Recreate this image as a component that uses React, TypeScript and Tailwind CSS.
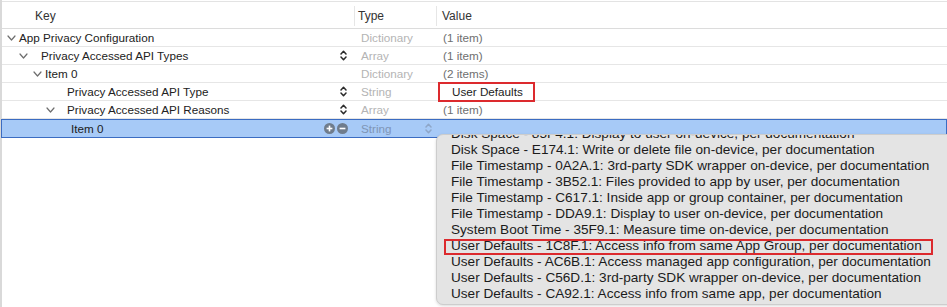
import React from "react";

type Row = {
  key: string;
  chevronX?: number;
  textX: number;
  type: string;
  value: string;
  stepper?: boolean;
  boxed?: boolean;
};

const rows: Row[] = [
  { key: "App Privacy Configuration", chevronX: 5, textX: 17, type: "Dictionary", value: "(1 item)" },
  { key: "Privacy Accessed API Types", chevronX: 17, textX: 39, type: "Array", value: "(1 item)", stepper: true },
  { key: "Item 0", chevronX: 31, textX: 43, type: "Dictionary", value: "(2 items)" },
  { key: "Privacy Accessed API Type", textX: 65, type: "String", value: "User Defaults", stepper: true, boxed: true },
  { key: "Privacy Accessed API Reasons", chevronX: 44, textX: 65, type: "Array", value: "(1 item)", stepper: true },
];

const reasons = [
  "Disk Space - 85F4.1: Display to user on-device, per documentation",
  "Disk Space - E174.1: Write or delete file on-device, per documentation",
  "File Timestamp - 0A2A.1: 3rd-party SDK wrapper on-device, per documentation",
  "File Timestamp - 3B52.1: Files provided to app by user, per documentation",
  "File Timestamp - C617.1: Inside app or group container, per documentation",
  "File Timestamp - DDA9.1: Display to user on-device, per documentation",
  "System Boot Time - 35F9.1: Measure time on-device, per documentation",
  "User Defaults - 1C8F.1: Access info from same App Group, per documentation",
  "User Defaults - AC6B.1: Access managed app configuration, per documentation",
  "User Defaults - C56D.1: 3rd-party SDK wrapper on-device, per documentation",
  "User Defaults - CA92.1: Access info from same app, per documentation",
];

function Chevron() {
  return (
    <svg width="9" height="6" viewBox="0 0 9 6" className="block">
      <polyline points="1,1 4.5,5 8,1" fill="none" stroke="#6e6e6e" strokeWidth="1.2" strokeLinecap="round" strokeLinejoin="round" />
    </svg>
  );
}

function Stepper({ color = "#2a2a2a" }: { color?: string }) {
  return (
    <svg width="7" height="11" viewBox="0 0 7 11" className="block">
      <polyline points="1,4 3.5,1.3 6,4" fill="none" stroke={color} strokeWidth="1.5" strokeLinecap="round" strokeLinejoin="round" />
      <polyline points="1,7 3.5,9.7 6,7" fill="none" stroke={color} strokeWidth="1.5" strokeLinecap="round" strokeLinejoin="round" />
    </svg>
  );
}

function CircleBtn({ plus }: { plus?: boolean }) {
  return (
    <svg width="11" height="11" viewBox="0 0 11 11" className="block">
      <circle cx="5.5" cy="5.5" r="5.5" fill="#6f7c8c" />
      <line x1="2.6" y1="5.5" x2="8.4" y2="5.5" stroke="white" strokeWidth="1.6" />
      {plus && <line x1="5.5" y1="2.6" x2="5.5" y2="8.4" stroke="white" strokeWidth="1.6" />}
    </svg>
  );
}

function TableRow({ row }: { row: Row }) {
  return (
    <div className="flex h-[18px] items-center border-b border-[#e6e6e6]">
      <div className="relative flex h-full w-[354px] shrink-0 items-center">
        {row.chevronX !== undefined && (
          <span className="absolute top-[6px]" style={{ left: row.chevronX }}>
            <Chevron />
          </span>
        )}
        <span className="text-[#222]" style={{ paddingLeft: row.textX }}>
          {row.key}
        </span>
        {row.stepper && (
          <span className="absolute left-[338px] top-[3px]">
            <Stepper />
          </span>
        )}
      </div>
      <div className="w-[82px] shrink-0 pl-[5px] text-[#b4b4b4]">{row.type}</div>
      <div className="flex-1">
        {row.boxed ? (
          <div className="-my-px flex h-[20px] w-[97px] items-center border-2 border-[#dc2a2e] pl-[12px] text-[#222]">
            {row.value}
          </div>
        ) : (
          <span className="pl-[5px] text-[#6f6f6f]">{row.value}</span>
        )}
      </div>
    </div>
  );
}

export default function App() {
  return (
    <div className="relative h-[307px] w-[947px] overflow-hidden bg-white font-['Liberation_Sans',Arial,sans-serif] text-[11.7px]">
      <div className="flex h-full">
        <div className="w-[2px] shrink-0 bg-[#d9d9d9]" />
        <div className="flex-1 pt-[1px]">
          <div className="border-t border-[#e3e3e3]" />
          {/* header */}
          <div className="flex h-[27px] items-center border-b border-[#dcdcdc] pt-[2px] text-[12px] text-[#333]">
            <div className="w-[352px] shrink-0 pl-[33px]">Key</div>
            <div className="flex h-[20px] w-[82px] shrink-0 items-center border-l border-[#e6e6e6] pl-[3px]">Type</div>
            <div className="flex h-[20px] flex-1 items-center border-l border-[#e6e6e6] pl-[5px]">Value</div>
          </div>
          {rows.map((r, i) => (
            <TableRow key={i} row={r} />
          ))}
          {/* selected row */}
          <div className="relative z-10 -ml-[1px] flex h-[19px] items-center border border-[#3b6cc2] bg-[#a7caf7]">
            <div className="relative flex h-full w-[355px] shrink-0 items-center">
              <span className="pl-[69px] text-[#1c1c1c]">Item 0</span>
              <span className="absolute left-[322px] top-[3px] flex gap-[2px]">
                <CircleBtn plus />
                <CircleBtn />
              </span>
            </div>
            <div className="relative flex h-full w-[82px] shrink-0 items-center pl-[4px] text-[#7f95b5]">
              String
              <span className="absolute left-[68px] top-[3px]">
                <Stepper color="#8ea6c8" />
              </span>
            </div>
          </div>
        </div>
      </div>

      {/* popup menu */}
      <div className="absolute left-[436px] top-[134px] z-20 h-[171px] w-[530px] overflow-hidden rounded-[7px] border border-[#cdcdcd] bg-[#e4e4e4] font-['Liberation_Sans',Arial,sans-serif] text-[13.6px] text-[#1b1b1b] shadow-[0_1px_3px_rgba(0,0,0,0.15)]">
        <div className="-mt-[9px]">
          {reasons.map((r, i) => (
            <div key={i} className="relative h-4 whitespace-nowrap pl-[14px] leading-4">
              {r}
              {i === 7 && (
                <span className="absolute left-[7px] top-[1px] h-[16px] w-[489px] border-2 border-[#dc2a2e]" />
              )}
            </div>
          ))}
        </div>
      </div>
    </div>
  );
}
